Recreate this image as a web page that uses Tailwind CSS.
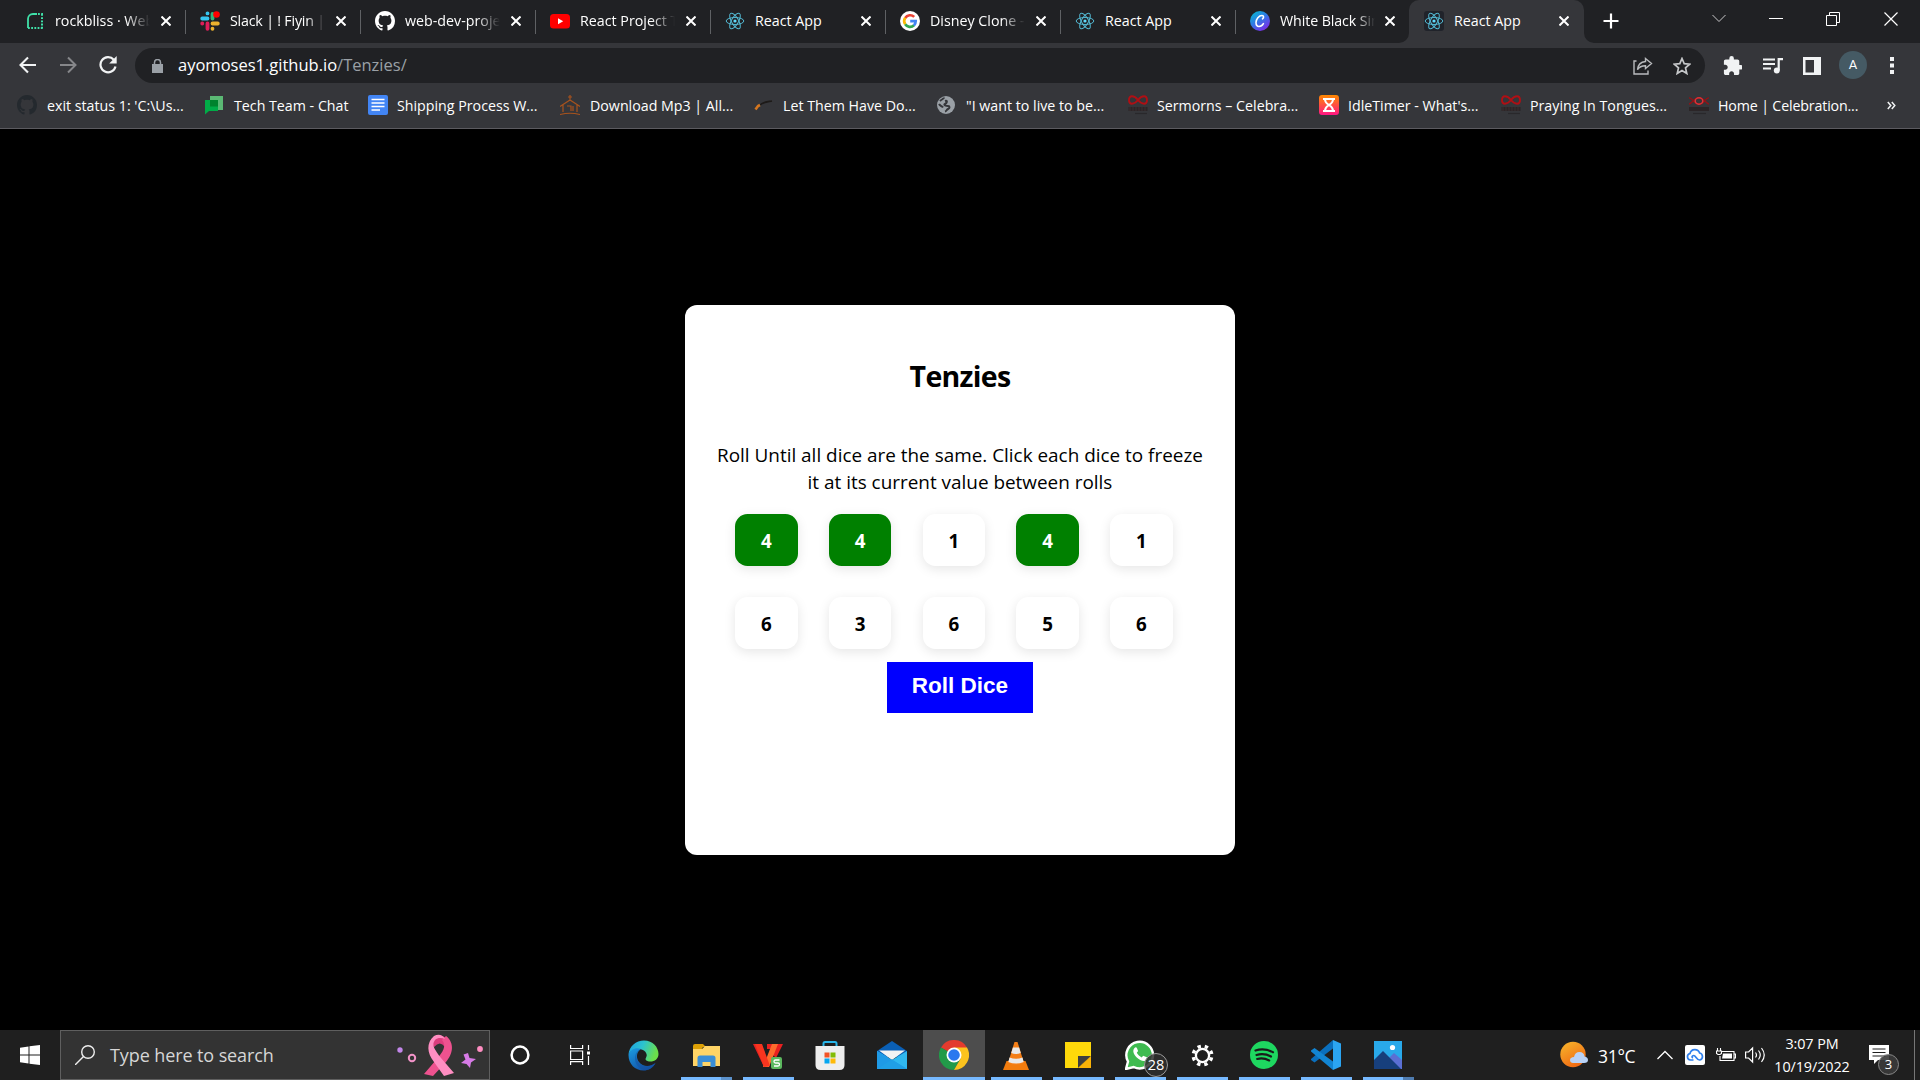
<!DOCTYPE html>
<html lang="en">
<head>
<meta charset="utf-8">
<title>React App</title>
<script src="https://cdn.jsdelivr.net/npm/@tailwindcss/browser@4"></script>
</head>
<body class="w-[1920px] h-[1080px] overflow-hidden bg-black flex flex-col font-['Open_Sans','Noto_Sans',sans-serif] text-white">

<svg class="hidden">
  <symbol id="x" viewBox="0 0 10 10"><path d="M.5.5l9 9M9.500.5l-9 9" stroke="#fff" stroke-width="2" fill="none"/></symbol>
  <symbol id="react" viewBox="0 0 20 20"><g fill="none" stroke="#53b9d3" stroke-width="1"><ellipse cx="10" cy="10" rx="8.800" ry="3.500"/><ellipse cx="10" cy="10" rx="8.800" ry="3.500" transform="rotate(60 10 10)"/><ellipse cx="10" cy="10" rx="8.800" ry="3.500" transform="rotate(120 10 10)"/></g><circle cx="10" cy="10" r="1.600" fill="#61dafb"/></symbol>
  <symbol id="github" viewBox="0 0 16 16"><path fill="currentColor" d="M8 0C3.58 0 0 3.58 0 8c0 3.54 2.29 6.53 5.47 7.59.4.07.55-.17.55-.38 0-.19-.01-.82-.01-1.49-2.01.37-2.53-.49-2.69-.94-.09-.23-.48-.94-.82-1.13-.28-.15-.68-.52-.01-.53.63-.01 1.08.58 1.23.82.72 1.21 1.87.87 2.33.66.07-.52.28-.87.51-1.07-1.78-.2-3.64-.89-3.64-3.95 0-.87.31-1.59.82-2.15-.08-.2-.36-1.02.08-2.12 0 0 .67-.21 2.2.82.64-.18 1.32-.27 2-.27s1.36.09 2 .27c1.53-1.04 2.2-.82 2.2-.82.44 1.1.16 1.92.08 2.12.51.56.82 1.27.82 2.15 0 3.07-1.87 3.75-3.65 3.95.29.25.54.73.54 1.48 0 1.07-.01 1.93-.01 2.2 0 .21.15.46.55.38A8.01 8.01 0 0 0 16 8c0-4.42-3.58-8-8-8z"/></symbol>
  <symbol id="church" viewBox="0 0 20 20"><path d="M10 5C6 0 1 0 1 5s5 5 9 0 9-5 9 0-5 5-9 0" fill="none" stroke="#b00f14" stroke-width="1.900"/><path d="M.5 12h19v4H.5z" fill="#2b2527"/><path d="M2 12v4M5 12v4M8 12v4M11 12v4M14 12v4M17 12v4" stroke="#3c3032" stroke-width="1"/><path d="M7 18.500h12" stroke="#29282b" stroke-width="1.200"/></symbol>
</svg>

<!-- tab strip -->
<header class="h-[43px] shrink-0 bg-[#202124] flex pl-[11px] text-[14.250px]">
  <div class="relative w-[175px] flex items-center pb-px pl-3.5">
    <svg class="size-5" viewBox="0 0 20 20"><path d="M3 17V8a5 5 0 0 1 5-5h4" fill="none" stroke="#3fe0a8" stroke-width="1.800"/><path d="M13 3h5M17 3v15M3 17h15" fill="none" stroke="#3fe0a8" stroke-width="2" stroke-dasharray="1.800 1.400"/></svg>
    <span class="ml-[10px] w-[95px] overflow-hidden whitespace-nowrap mask-r-from-75% mask-r-to-100%">rockbliss · Web</span>
    <svg class="ml-[11px] size-[10px]"><use href="#x"/></svg>
    <i class="absolute right-0 top-2.5 h-6 w-px bg-[#5f6164]"></i>
  </div>
  <div class="relative w-[175px] flex items-center pb-px pl-3.5">
    <svg class="size-5" viewBox="0 0 20 20" stroke-width="3.800" stroke-linecap="round" fill="none"><path d="M7.500 2.300v.1M2.200 7.500h5.300" stroke="#36c5f0"/><path d="M12.500 3v4.500" stroke="#2eb67d"/><path d="M12.500 12.500h5.300M12.500 17.800v-.1" stroke="#ecb22e"/><path d="M7.500 12.500v5.300M2.200 12.500h.1" stroke="#e01e5a"/><circle cx="16.500" cy="3.500" r="3.300" fill="#f00" stroke="none"/></svg>
    <span class="ml-[10px] w-[95px] overflow-hidden whitespace-nowrap tracking-[-0.2px] mask-r-from-80% mask-r-to-100%">Slack | ! Fiyin | Z</span>
    <svg class="ml-[11px] size-[10px]"><use href="#x"/></svg>
    <i class="absolute right-0 top-2.5 h-6 w-px bg-[#5f6164]"></i>
  </div>
  <div class="relative w-[175px] flex items-center pb-px pl-3.5">
    <svg class="size-5 text-white"><use href="#github"/></svg>
    <span class="ml-[10px] w-[95px] overflow-hidden whitespace-nowrap mask-r-from-75% mask-r-to-100%">web-dev-projects</span>
    <svg class="ml-[11px] size-[10px]"><use href="#x"/></svg>
    <i class="absolute right-0 top-2.5 h-6 w-px bg-[#5f6164]"></i>
  </div>
  <div class="relative w-[175px] flex items-center pb-px pl-3.5">
    <svg class="size-5" viewBox="0 0 20 20"><rect y="3" width="20" height="14.500" rx="3.500" fill="#f00"/><path d="M8 7.200v6l5.200-3z" fill="#fff"/></svg>
    <span class="ml-[10px] w-[95px] overflow-hidden whitespace-nowrap mask-r-from-75% mask-r-to-100%">React Project Tu</span>
    <svg class="ml-[11px] size-[10px]"><use href="#x"/></svg>
    <i class="absolute right-0 top-2.5 h-6 w-px bg-[#5f6164]"></i>
  </div>
  <div class="relative w-[175px] flex items-center pb-px pl-3.5">
    <svg class="size-5"><use href="#react"/></svg>
    <span class="ml-[10px] w-[95px] whitespace-nowrap">React App</span>
    <svg class="ml-[11px] size-[10px]"><use href="#x"/></svg>
    <i class="absolute right-0 top-2.5 h-6 w-px bg-[#5f6164]"></i>
  </div>
  <div class="relative w-[175px] flex items-center pb-px pl-3.5">
    <svg class="size-5" viewBox="0 0 20 20" fill="none" stroke-width="2.700"><circle cx="10" cy="10" r="10" fill="#fff"/><path d="M5.200 7A5.800 5.800 0 0 1 14.200 5.900" stroke="#ea4335"/><path d="M5.200 13.200a5.800 5.800 0 0 1 0-6.400" stroke="#fbbc05"/><path d="M14 14.300A5.800 5.800 0 0 1 5.200 13.200" stroke="#34a853"/><path d="M10.200 10.100h5.500a5.800 5.800 0 0 1-1.800 4.300" stroke="#4285f4"/></svg>
    <span class="ml-[10px] w-[95px] overflow-hidden whitespace-nowrap mask-r-from-75% mask-r-to-100%">Disney Clone - G</span>
    <svg class="ml-[11px] size-[10px]"><use href="#x"/></svg>
    <i class="absolute right-0 top-2.5 h-6 w-px bg-[#5f6164]"></i>
  </div>
  <div class="relative w-[175px] flex items-center pb-px pl-3.5">
    <svg class="size-5"><use href="#react"/></svg>
    <span class="ml-[10px] w-[95px] whitespace-nowrap">React App</span>
    <svg class="ml-[11px] size-[10px]"><use href="#x"/></svg>
    <i class="absolute right-0 top-2.5 h-6 w-px bg-[#5f6164]"></i>
  </div>
  <div class="w-[173px] flex items-center pb-px pl-3.5">
    <svg class="size-5" viewBox="0 0 20 20"><defs><linearGradient id="cv" x1="0" y1="0" x2=".7" y2="1"><stop offset="0" stop-color="#00c4cc"/><stop offset=".5" stop-color="#2f7be5"/><stop offset="1" stop-color="#7d2ae8"/></linearGradient></defs><circle cx="10" cy="10" r="10" fill="url(#cv)"/><path d="M12.500 7.800c1.500-1 1.500-3.300-.5-3.300C9 4.500 6 8 6 11.600c0 2.400 1.200 3.900 3 3.900 2 0 3.500-1.300 4.400-2.800" fill="none" stroke="#fff" stroke-width="1.600" stroke-linecap="round"/></svg>
    <span class="ml-[10px] w-[95px] overflow-hidden whitespace-nowrap tracking-[-0.1px] mask-r-from-80% mask-r-to-100%">White Black Sim</span>
    <svg class="ml-[10px] size-[10px]"><use href="#x"/></svg>
  </div>
  <div class="relative w-[175px] flex items-center pb-px pl-[15px] rounded-t-[10px] bg-[#35363a]">
    <svg class="absolute bottom-0 -left-[10px] size-[10px]" viewBox="0 0 10 10"><path d="M10 0v10H0A10 10 0 0 0 10 0" fill="#35363a"/></svg>
    <svg class="absolute bottom-0 -right-[10px] size-[10px]" viewBox="0 0 10 10"><path d="M0 0v10h10A10 10 0 0 1 0 0" fill="#35363a"/></svg>
    <svg class="size-5 rounded-[3px] bg-[#20232a]"><use href="#react"/></svg>
    <span class="ml-[10px] w-[95px] whitespace-nowrap">React App</span>
    <svg class="ml-[10px] size-[10px]"><use href="#x"/></svg>
  </div>
  <svg class="ml-[19px] mt-[13px] size-4" viewBox="0 0 16 16"><path d="M8 .5v15M.5 8h15" stroke="#fff" stroke-width="2.200"/></svg>
  <svg class="ml-[93px] mt-[14px] w-[14px] h-[9px]" viewBox="0 0 14 9"><path d="M.5 1L7 7.500 13.500 1" fill="none" stroke="#c8c8c9"/></svg>
  <svg class="ml-[43px] mt-[12px] w-[14px] h-[14px]" viewBox="0 0 14 14"><path d="M0 6.500h14" stroke="#fff"/></svg>
  <svg class="ml-[43px] mt-[12px] size-[14px]" viewBox="0 0 14 14"><path d="M.5 3.500h10v10H.5zM3.500 3.500v-3h10v10h-3" fill="none" stroke="#fff"/></svg>
  <svg class="ml-[44px] mt-[12px] size-[14px]" viewBox="0 0 14 14"><path d="M.5.5l13 13M13.500.5l-13 13" stroke="#fff" stroke-width="1.200"/></svg>
</header>

<!-- toolbar -->
<nav class="h-[43px] shrink-0 bg-[#35363a] flex items-center pt-[2px] pl-[19px]">
  <svg class="size-[18px] -mt-px" viewBox="0 0 18 18"><path d="M17 9H2M9 1.500L1.500 9 9 16.500" fill="none" stroke="#f1f3f4" stroke-width="2.100"/></svg>
  <svg class="ml-[22px] size-[18px] -mt-px" viewBox="0 0 18 18"><path d="M1 9h15M9 1.500L16.500 9 9 16.500" fill="none" stroke="#86878a" stroke-width="2"/></svg>
  <svg class="ml-[22px] size-[18px] -mt-px" viewBox="0 0 18 18"><path d="M14.800 3.700A7.600 7.600 0 1 0 16.500 10.500" fill="none" stroke="#f1f3f4" stroke-width="2.200"/><path d="M17.700 0v7.500h-7.500z" fill="#f1f3f4"/></svg>
  <div class="ml-[18px] w-[1570px] h-[35px] rounded-full bg-[#202124] flex items-center pl-[17px] text-[16.500px]">
    <svg class="w-[11px] h-[14px]" viewBox="0 0 11 14"><path d="M0 5h11v9H0z" fill="#9aa0a6"/><path d="M2.500 6V3.500a3 3 0 0 1 6 0V6" fill="none" stroke="#9aa0a6" stroke-width="1.500"/></svg>
    <span class="ml-[15px] whitespace-nowrap">ayomoses1.github.io<span class="text-[#9aa0a6]">/Tenzies/</span></span>
    <svg class="ml-auto w-[20px] h-[18px]" viewBox="0 0 20 18" fill="none" stroke="#b9bbbe" stroke-width="1.400"><path d="M3.500 4H1v13h14v-3.500"/><path d="M12.500 1.500l6 5-6 5V8.700c-4 0-6.500 1.300-8 4 .4-4.500 3-7.800 8-8.200z"/></svg>
    <svg class="ml-[20px] mr-[14px] size-[18px]" viewBox="0 0 18 18"><path d="M9 1.500l2.200 5.200 5.500.5-4.200 3.700 1.300 5.600L9 13.600l-4.800 2.900 1.300-5.600L1.300 7.200l5.500-.5z" fill="none" stroke="#c5c7c9" stroke-width="1.700"/></svg>
  </div>
  <svg class="ml-[18px] size-[19px]" viewBox="1 1 21 21"><path fill="#f1f3f4" d="M20.500 11H19V7c0-1.100-.9-2-2-2h-4V3.500a2.500 2.500 0 0 0-5 0V5H4c-1.100 0-2 .9-2 2v3.800h1.500c1.500 0 2.700 1.200 2.700 2.700S5 16.200 3.500 16.200H2V20c0 1.100.9 2 2 2h3.800v-1.500c0-1.500 1.200-2.700 2.700-2.700s2.700 1.200 2.700 2.700V22H17c1.100 0 2-.9 2-2v-4h1.500a2.500 2.500 0 0 0 0-5z"/></svg>
  <svg class="ml-[21px] w-[20px] h-[16px]" viewBox="0 0 20 16"><path d="M0 1.500h12M0 6h12M0 10.500h8" stroke="#f1f3f4" stroke-width="2"/><path d="M15.700 12V1.200H20" stroke="#f1f3f4" stroke-width="2.200" fill="none"/><circle cx="13.800" cy="12.500" r="3" fill="#f1f3f4"/></svg>
  <svg class="ml-[20px] size-[18px]" viewBox="0 0 18 18"><path fill="#f1f3f4" fill-rule="evenodd" d="M0 0h18v18H0zM2.500 3v12.500H11V3z"/></svg>
  <div class="ml-[18px] -mt-px size-7 rounded-full bg-[#455a64] text-[13px] font-['Roboto',sans-serif] flex items-center justify-center">A</div>
  <svg class="ml-[23px] w-[4px] h-[17px]" viewBox="0 0 4 17"><path d="M0 0h4v4H0zM0 6.500h4v4H0zM0 13h4v4H0z" fill="#f1f3f4"/></svg>
</nav>

<!-- bookmarks bar -->
<nav class="h-[43px] shrink-0 bg-[#35363a] border-b border-[#5c5b60] flex items-center pl-[17px] pb-[3px] text-[14.220px] whitespace-nowrap">
  <div class="w-[187px] flex items-center gap-[10px]"><svg class="size-5 text-[#24292e]"><use href="#github"/></svg>exit status 1: 'C:\Us...</div>
  <div class="w-[164px] flex items-center gap-[10px]"><svg class="size-5" viewBox="0 0 20 20"><path d="M6 1h13v14H6z" fill="#5bb974"/><path d="M1 5h13v11H5l-4 3.500z" fill="#00ac47"/><path d="M6 5h8v6.500H6z" fill="#00832d"/></svg>Tech Team - Chat</div>
  <div class="w-[192px] flex items-center gap-[9px]"><svg class="size-5" viewBox="0 0 20 20"><rect width="20" height="20" rx="2" fill="#4285f4"/><path d="M3.500 4.500h13M3.500 8h13M3.500 11.500h13M3.500 15h8.500" stroke="#fff" stroke-width="1.700"/></svg>Shipping Process W...</div>
  <div class="w-[193px] flex items-center gap-[10px]"><svg class="size-5" viewBox="0 0 20 20" fill="none" stroke="#a8531d" stroke-width="1.200"><path d="M10 0v6M8 2h4M0 11.500L10 5l10 6.500M3 10v7M17 10v7M7 11h4v5M13 11v5M0 19.500q10-2.500 20 0"/></svg>Download Mp3 | All...</div>
  <div class="w-[183px] flex items-center gap-[10px]"><svg class="size-5" viewBox="0 0 20 20"><path d="M7 10c3-3 6-3 12-4" fill="none" stroke="#1d1a18" stroke-width="1.600"/><path d="M2.500 14.500L5 11l2-1" fill="none" stroke="#d4761f" stroke-width="2.600"/></svg>Let Them Have Do...</div>
  <div class="w-[192px] flex items-center gap-[10px]"><svg class="size-5" viewBox="0 0 20 20"><circle cx="10" cy="10" r="9" fill="#9aa0a6"/><path d="M4 6c2-2 4-2 4-3.500M9 6c3-1 2 2 0 3s1 2 3 2 2 2 0 3-1 2-3 2.500M3 9c1 2 3 2 4 3.500" fill="none" stroke="#35363a" stroke-width="2"/></svg>"I want to live to be...</div>
  <div class="w-[191px] flex items-center gap-[9px]"><svg class="size-5"><use href="#church"/></svg>Sermorns – Celebra...</div>
  <div class="w-[182px] flex items-center gap-[9px]"><svg class="size-5" viewBox="0 0 20 20"><defs><linearGradient id="it" x1="0" y1="0" x2="0" y2="1"><stop stop-color="#ff8a00"/><stop offset="1" stop-color="#ff1684"/></linearGradient></defs><rect width="20" height="20" rx="3" fill="url(#it)"/><path d="M4 4h12M4 16h12M6 4.500c0 3 2 4 4 5.500 2-1.500 4-2.500 4-5.500M6 15.500c0-3 2-4 4-5.500 2 1.500 4 2.500 4 5.500" fill="none" stroke="#fff" stroke-width="1.900"/></svg>IdleTimer - What's...</div>
  <div class="w-[188px] flex items-center gap-[9px]"><svg class="size-5"><use href="#church"/></svg>Praying In Tongues...</div>
  <div class="w-[198px] flex items-center gap-[9px] tracking-[-0.150px]"><svg class="size-5" viewBox="0 0 20 20"><path d="M0 3c3-1 5 6 9 6h2c4 0 6-7 9-6M0 9c3 0 5-6 9-6h2c4 0 6 6 9 6" fill="none" stroke="#8f1317" stroke-width="1.500"/><ellipse cx="10" cy="6" rx="3.800" ry="3.200" fill="none" stroke="#d8353a" stroke-width="1.500"/><path d="M0 12h20v4H0z" fill="#2b2527"/><path d="M4 18.500h13" stroke="#29282b" stroke-width="1.200"/></svg>Home | Celebration...</div>
  <svg class="size-[9px]" viewBox="0 0 9 9"><path d="M.8 1l3 3.500-3 3.500M4.800 1l3 3.500-3 3.500" fill="none" stroke="#f1f3f4" stroke-width="1.500"/></svg>
</nav>

<!-- game -->
<main class="h-[901px] shrink-0 flex justify-center pt-[176px]">
  <section class="w-[550px] h-[550px] rounded-[12px] bg-white text-black flex flex-col items-center">
    <h1 class="mt-[50px] h-[42px] leading-[42px] text-[28.500px] font-bold tracking-[-0.7px]">Tenzies</h1>
    <p class="mt-[45px] w-[510px] text-center text-[18.920px] leading-[27px]">Roll Until all dice are the same. Click each dice to freeze<br>it at its current value between rolls</p>
    <div class="mt-[18px] mr-[12.500px] grid grid-cols-5 gap-x-[31.250px] gap-y-[31px] text-[18.750px] font-bold *:w-[62.500px] *:h-[52px] *:pt-[3px] *:rounded-[12.500px] *:flex *:items-center *:justify-center *:shadow-[0_3px_12px_rgba(0,0,0,0.1)]">
      <div class="bg-[#008000] text-white">4</div><div class="bg-[#008000] text-white">4</div><div>1</div><div class="bg-[#008000] text-white">4</div><div>1</div>
      <div>6</div><div>3</div><div>6</div><div>5</div><div>6</div>
    </div>
    <button class="mt-[13px] w-[146px] h-[51px] pb-[3px] bg-[#0000ff] text-white font-bold text-[22.500px] font-['Liberation_Sans',sans-serif]">Roll Dice</button>
  </section>
</main>

<!-- taskbar -->
<footer class="h-[50px] shrink-0 bg-[#1f1f1f] flex items-center">
  <div class="w-[60px] flex justify-center"><svg class="size-5" viewBox="0 0 20 20" fill="#fff"><path d="M0 2.700L8.500 1.500V9.500H0zM9.500 1.300L20 0v9.500H9.500zM0 10.500h8.500v8L0 17.300zM9.500 10.500H20V20L9.500 18.700z"/></svg></div>
  <div class="w-[430px] h-[50px] bg-[#333] border border-[#5f5f5f] flex items-center pl-[14px] text-[18px] tracking-[-0.1px] text-[#d6d6d6]">
    <svg class="size-5" viewBox="0 0 20 20" fill="none" stroke="#eee" stroke-width="1.400"><circle cx="13" cy="7" r="6.300"/><path d="M8.500 11.500L0 20"/></svg>
    <span class="ml-[15px] w-[286px] whitespace-nowrap">Type here to search</span>
    <svg class="w-[88px] h-[46px]" viewBox="0 0 88 46"><circle cx="4" cy="18" r="2.700" fill="#c387ea"/><circle cx="16" cy="26" r="3.200" fill="none" stroke="#f293c8" stroke-width="2"/><path d="M34 9q10-11 19 0l-4 6q-5-7-11 0z" fill="#dd3c7d"/><path d="M50 4c9 7 7 18 0 26L37 44l-9-2 12-14c7-8 11-14 6-20z" fill="#ee528f"/><path d="M38 4c-8 7-7 17 0 26l10 14 10-3-13-15c-6-8-10-13-6-18 3-3 7-2 10-1-3-5-7-5-11-3z" fill="#ff8ec2"/><path d="M72 21l1.500 5 6.500 1-5 3.500-1 5.500-3.500-4-5.500-1 4.500-3.500-2-5z" fill="#d77be6"/><circle cx="84" cy="17" r="2.900" fill="#ff8ec2"/></svg>
  </div>
  <div class="w-[60px] flex justify-center"><svg class="size-[20px]" viewBox="0 0 20 20"><circle cx="10" cy="10" r="8.400" fill="none" stroke="#fff" stroke-width="2.500"/></svg></div>
  <div class="w-[60px] flex justify-center"><svg class="size-[20px]" viewBox="0 0 20 20" fill="none" stroke="#fff" stroke-width="1.200"><path d="M.6 0v3.500h12V0M.6 6h12v8.500H.6zM.6 20v-3.300h12V20M18.500 0v5M18.500 11v9"/><path d="M17 6.500h3v3h-3z" fill="#fff" stroke="none"/></svg></div>

  <div class="w-[65px] flex justify-center pl-[2px]"><svg class="size-[31px]" viewBox="0 0 31 31"><defs><linearGradient id="e1" x1="0" y1="0" x2="1" y2=".3"><stop stop-color="#1b9de2"/><stop offset=".5" stop-color="#2cc3cf"/><stop offset="1" stop-color="#6be04a"/></linearGradient><linearGradient id="e2" x1="0" y1="0" x2=".6" y2="1"><stop stop-color="#1b9de2"/><stop offset="1" stop-color="#1253a8"/></linearGradient></defs><path d="M.5 15C1 6 8 .5 16 .5c9 0 14.500 7 14.500 13.500 0 5-4 7.500-8 7.500-4 0-5.500-2-5-3 3-4 0-8-4-9C8 8 2 11 .5 15z" fill="url(#e1)"/><path d="M.5 15C2 9 8 7 13 9c-5 3-5 9-2 13 4 5 11 5 16.500 1C25 28 20 30.500 15.500 30.500 7 30.500.5 24 .5 15z" fill="url(#e2)"/><path d="M13 9.300c-5 2.700-6 8-2.500 13 4 5 12 5 17 .7-2 4.500-6 7-10 7.300-7-1-11-7-10.500-13 .3-4 2.500-7 6-8z" fill="#1450a0" opacity=".55"/><path d="M15.500 12.500c3 0 3.500 4 1.500 6.500.3 2.500 4 4.500 9 3-5 4-14 1-13.500-5 0-2 1-4 3-4.500z" fill="#1f1f1f"/></svg></div>

  <div class="relative w-[62px] h-[50px] flex items-center justify-center"><svg class="w-[27px] h-[23px]" viewBox="0 0 27 23"><path d="M0 2q0-2 2-2h8l3 3h-3l-2 3H0z" fill="#dda005"/><path d="M0 5h9l3-3h15v20H0z" fill="#ffd466"/><path d="M4.500 23v-9q0-2.500 2.500-2.500h13q2.500 0 2.500 2.500v9h-5v-5h-8v5z" fill="#3b8ed6"/></svg><i class="absolute bottom-0 left-[6px] w-[40px] h-[3px] bg-[#76b9ff]"></i><i class="absolute bottom-0 left-[46px] w-[11px] h-[3px] bg-[#5c92cc]"></i></div>
  <div class="relative w-[62px] h-[50px] flex items-center justify-center"><svg class="w-[30px] h-[26px] mt-0.5" viewBox="0 0 30 26"><path d="M14 1h16l-7 14-4-4 3-5h-8z" fill="#e92020"/><path d="M0 1h8.500l3.500 10-1 13z" fill="#e52222"/><path d="M10 24L19 1h6l-9 23z" fill="#ff6b2c"/><path d="M2 1h7l8 22-6 1z" fill="#f9351f"/><rect x="18" y="14" width="11" height="12" rx="2" fill="#5cb85f"/><path d="M26.500 17h-4q-1.500 0-1.500 1.500t1.500 1.500h2.500q1.500 0 1.500 1.500T25 23h-4" fill="none" stroke="#fff" stroke-width="1.300"/></svg><i class="absolute bottom-0 left-[6px] w-[51px] h-[3px] bg-[#76b9ff]"></i></div>
  <div class="w-[62px] flex justify-center"><svg class="size-[30px]" viewBox="0 0 30 30"><path d="M8.500 7V3.500Q8.500 2 10 2h10q1.500 0 1.500 1.500V7" fill="none" stroke="#29b6ea" stroke-width="2"/><path d="M.5 6h29v19q0 5-5 5h-19q-5 0-5-5z" fill="#eee"/><path d="M9.500 12.500h5v5h-5z" fill="#f35325"/><path d="M15.500 12.500h5v5h-5z" fill="#81bc06"/><path d="M9.500 18.500h5v5h-5z" fill="#05a6f0"/><path d="M15.500 18.500h5v5h-5z" fill="#ffba08"/></svg></div>
  <div class="w-[62px] flex justify-center"><svg class="w-[30px] h-[28px]" viewBox="0 0 30 28"><path d="M0 10L15 0l15 10v6H0z" fill="#0a5fb5"/><path d="M2 9.500h26L15 19z" fill="#f4f4f4"/><path d="M0 10l15 9 15-9v18H0z" fill="#30b8f0"/><path d="M0 10l30 18H0z" fill="#1f9ae6"/><path d="M0 28l15-9.500L30 28z" fill="#209fe6"/></svg></div>
  <div class="relative w-[62px] h-[50px] bg-[#4d4d4d] flex items-center justify-center"><svg class="size-[30px]" viewBox="0 0 48 48"><path d="M24 24L3.200 12A24 24 0 0 1 44.800 12z" fill="#e33b2e"/><path d="M24 24L3.200 12A24 24 0 0 0 24 48l10-18z" fill="#229a49"/><path d="M24 12h20.800A24 24 0 0 1 24 48l10.400-18z" fill="#fcc31e"/><circle cx="24" cy="24" r="12" fill="#fff"/><circle cx="24" cy="24" r="9.300" fill="#2a78ef"/></svg><i class="absolute bottom-0 left-0 w-[62px] h-[3px] bg-[#76b9ff]"></i></div>
  <div class="relative w-[62px] h-[50px] flex items-center justify-center"><svg class="w-[26px] h-[29px]" viewBox="0 0 26 29"><path d="M3.500 20h19L26 29H0z" fill="#f27c0e"/><path d="M11.500 1h3l6.500 21q-8 4-16 0z" fill="#f57f17"/><path d="M9.900 6.500h6.200l1.700 5.500q-5 2-9.600 0zM6.500 16.500q6.500 2.500 13 0l1.200 4.500q-7.700 3-15.400 0z" fill="#e9e9e9"/></svg><i class="absolute bottom-0 left-[6px] w-[51px] h-[3px] bg-[#76b9ff]"></i></div>
  <div class="relative w-[62px] h-[50px] flex items-center justify-center"><svg class="size-[26px]" viewBox="0 0 26 26"><path d="M0 0h26v14L13 26H0z" fill="#ffd90a"/><path d="M13 26V14h13z" fill="#3e3e3e"/><path d="M26 14v12H13z" fill="#f9b208"/></svg><i class="absolute bottom-0 left-[6px] w-[51px] h-[3px] bg-[#76b9ff]"></i></div>
  <div class="relative w-[62px] h-[50px] flex items-center justify-center"><svg class="size-[30px]" viewBox="0 0 30 30"><path d="M1 29l2-7.500A13.300 13.300 0 1 1 8.700 27z" fill="#3fbb50" stroke="#fff" stroke-width="2.400"/><path d="M9.500 8c1-1 2-.8 2.500.3l1 2.400c.2.600-.8 1.500-1.200 2 1.200 2.300 2.800 3.700 5 4.700.8-.6 1.300-1.800 2-1.500l3 1.400c.8.500 0 2.500-1 3.200-2.300 1.500-6.200-.3-9.300-3.300S7.300 10.300 9.500 8z" fill="#fff"/></svg><span class="absolute left-[35px] top-[23px] size-[24px] rounded-full border border-[#999] bg-[#2f2f2f]/85 text-[14.500px] leading-[22px] text-center">28</span><i class="absolute bottom-0 left-[6px] w-[51px] h-[3px] bg-[#76b9ff]"></i></div>
  <div class="relative w-[62px] h-[50px] flex items-center justify-center"><svg class="size-[23px]" viewBox="0 0 23 23" fill="none" stroke="#fff"><circle cx="11.500" cy="11.500" r="6.600" stroke-width="2.300"/><circle cx="11.500" cy="11.500" r="9.300" stroke-width="3.400" stroke-dasharray="3.400 3.904" stroke-dashoffset="-2"/></svg><i class="absolute bottom-0 left-[6px] w-[51px] h-[3px] bg-[#76b9ff]"></i></div>
  <div class="relative w-[62px] h-[50px] flex items-center justify-center"><svg class="size-[28px]" viewBox="0 0 28 28"><circle cx="14" cy="14" r="14" fill="#1ed760"/><path d="M5.500 9.500q9-2.700 17.500 1.700M6.500 14q7.500-2.200 14.500 1.500M7.200 18q6-1.700 12 1.400" fill="none" stroke="#1a1a1a" stroke-width="2.200" stroke-linecap="round"/></svg><i class="absolute bottom-0 left-[6px] w-[51px] h-[3px] bg-[#76b9ff]"></i></div>
  <div class="relative w-[62px] h-[50px] flex items-center justify-center"><svg class="size-[30px]" viewBox="0 0 30 30"><path d="M22 0v8.500L3.500 22.500 0 20v-1z" fill="#0a6fbd"/><path d="M0 10.500L3.500 8 22 21.500V30L0 11.500z" fill="#1285d3"/><path d="M22 0l8 3.500v23L22 30z" fill="#2ba5f2"/></svg><i class="absolute bottom-0 left-[6px] w-[51px] h-[3px] bg-[#76b9ff]"></i></div>
  <div class="relative w-[62px] h-[50px] flex items-center justify-center"><svg class="size-[28px]" viewBox="0 0 28 28"><path d="M0 0h28v28H0z" fill="#29a9ea"/><path d="M12 20l8-8 8 7v9H14z" fill="#5b6fd3"/><path d="M0 19l9-9 18 18H0z" fill="#173f7c"/><circle cx="18.500" cy="6.500" r="2.600" fill="#fff"/></svg><i class="absolute bottom-0 left-[6px] w-[40px] h-[3px] bg-[#76b9ff]"></i><i class="absolute bottom-0 left-[46px] w-[11px] h-[3px] bg-[#4f7cb0]"></i></div>

  <svg class="ml-[141px] w-[28px] h-[28px]" viewBox="0 0 28 28"><defs><linearGradient id="sun" x1="0" y1="0" x2=".6" y2="1"><stop stop-color="#f8b82c"/><stop offset="1" stop-color="#f06a14"/></linearGradient></defs><circle cx="13" cy="13.500" r="12.700" fill="url(#sun)"/><path d="M13 22q-3-.3-3-3t4-3q1-5 5.500-5t5 4.500q3.500.5 3.500 3.500t-4 3z" fill="#b9d2f6"/></svg>
  <span class="ml-[10px] w-[48px] text-[17.500px] pt-[3px] tracking-[-0.3px] whitespace-nowrap">31°C</span>
  <svg class="ml-[11px] w-[16px] h-[10px]" viewBox="0 0 16 10"><path d="M.5 9L8 1.500 15.500 9" fill="none" stroke="#fff" stroke-width="1.300"/></svg>
  <svg class="ml-[12px] size-5" viewBox="0 0 20 20"><rect width="20" height="20" rx="2" fill="#fff"/><path d="M8.500 15H5.500a3.300 3.300 0 0 1-.5-6.500 5 5 0 0 1 9.600-.5 3.600 3.600 0 0 1 .2 7c-3 .3-4-4.500-6-4.500s-2.300 2-.8 2.500" fill="none" stroke="#2f80ed" stroke-width="1.700"/></svg>
  <svg class="ml-[11px] w-[20px] h-[14px]" viewBox="0 0 20 14" fill="none" stroke="#fff" stroke-width="1.100"><path d="M6 3.500h12v9H4V8M18.500 6h1v4h-1M1.500 0v3M4.500 0v3M.5 3h5v2.500l-1.500 1h-2l-1.500-1z"/><path d="M7 5.500h9v5H6z" fill="#fff" stroke="none"/></svg>
  <svg class="ml-[9px] w-[21px] h-[18px]" viewBox="0 0 21 18" fill="none" stroke="#fff" stroke-width="1.200"><path d="M.6 6v6h3l4 4V2l-4 4zM10.500 6.500q2 2.500 0 5M13.500 4.500q3.500 4.500 0 9M16.500 2q5.500 7 0 14"/></svg>
  <div class="ml-[6px] w-[80px] text-center text-[14.400px] leading-[23px] tracking-[-0.1px] whitespace-nowrap"><div>3:07 PM</div><div>10/19/2022</div></div>
  <div class="relative ml-[17px] w-[30px] h-[50px]"><svg class="absolute left-0 top-[15px] w-[20px] h-[19px]" viewBox="0 0 20 19"><path d="M0 0h20v15H9l-4 4v-4H0z" fill="#fff"/><path d="M3.500 4h13M3.500 7.500h13M3.500 11h13" stroke="#1f1f1f" stroke-width="1.200"/></svg><span class="absolute left-[9px] top-[24px] size-[21px] rounded-full border border-[#888] bg-[#3a3a3a]/90 text-[13px] leading-[19px] text-center">3</span></div>
  <i class="ml-[15px] h-[50px] w-px bg-[#777]"></i>
</footer>
</body>
</html>
